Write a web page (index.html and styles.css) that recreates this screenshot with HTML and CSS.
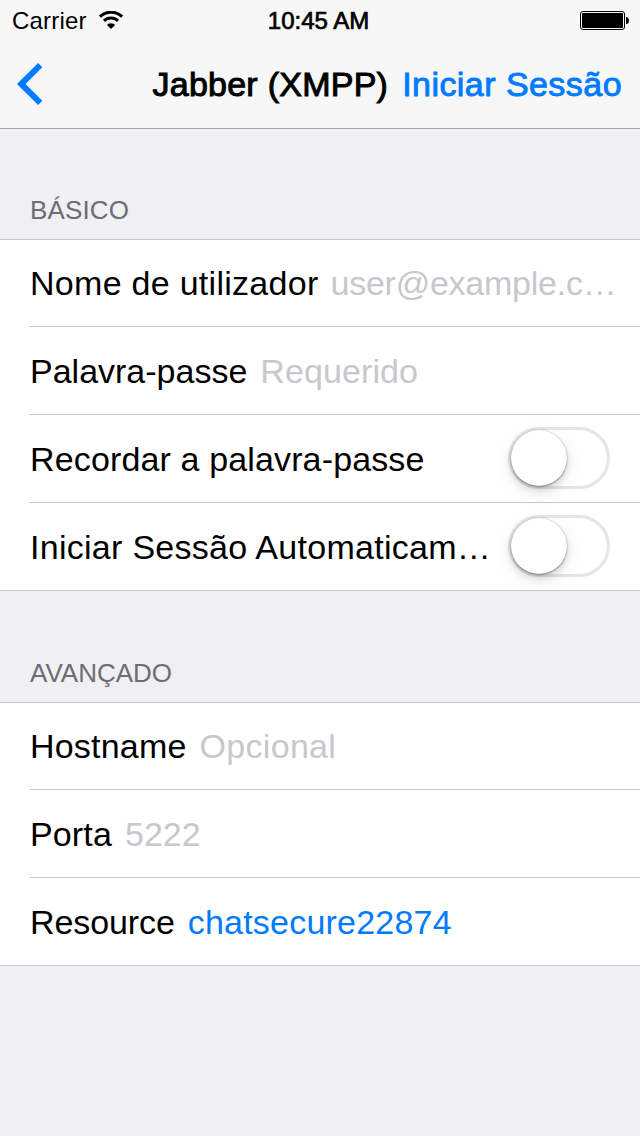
FILE: index.html
```html
<!DOCTYPE html>
<html lang="pt">
<head>
<meta charset="utf-8">
<title>Jabber (XMPP)</title>
<link rel="stylesheet" href="styles.css">
</head>
<body>
<header class="top">
  <div class="status">
    <div class="status-left">
      <span class="carrier">Carrier</span>
      <svg class="wifi" width="26" height="18" viewBox="0 0 26 18" fill="none" stroke="#000">
        <path d="M1.900 5.700A16 16 0 0 1 24.100 5.700" stroke-width="3.200"/>
        <path d="M6 9.900A10 10 0 0 1 20 9.900" stroke-width="3"/>
        <path d="M13 18L9.200 14.200Q9.500 12.300 13 12.300T16.800 14.200Z" fill="#000" stroke="none"/>
      </svg>
    </div>
    <span class="clock">10:45 AM</span>
    <div class="status-right">
      <svg class="battery" width="49" height="19" viewBox="0 0 49 19">
        <rect x="0.5" y="0.5" width="44" height="18" rx="2.5" fill="none" stroke="#000"/>
        <rect x="2" y="2" width="41" height="15" rx="1" fill="#000"/>
        <path d="M46 6h1q2 1 2 3.500t-2 3.500h-1z" fill="#000"/>
      </svg>
    </div>
  </div>
  <nav class="nav">
    <svg class="back" width="27" height="42" viewBox="0 0 27 42"><path d="M24.200 2.200L5.200 21L24.200 39.800" fill="none" stroke="#007aff" stroke-width="6"/></svg>
    <h1 class="title">Jabber (XMPP)</h1>
    <a class="login">Iniciar Sessão</a>
  </nav>
</header>
<main>
  <h2 class="heading">BÁSICO</h2>
  <section class="group">
    <div class="row"><span class="label wide">Nome de utilizador</span><span class="field hint-user">user@example.c…</span></div>
    <div class="row"><span class="label compact">Palavra-passe</span><span class="field hint-required">Requerido</span></div>
    <div class="row"><span class="label">Recordar a palavra-passe</span><span class="toggle"><span class="knob"></span></span></div>
    <div class="row"><span class="label auto">Iniciar Sessão Automaticam…</span><span class="toggle"><span class="knob"></span></span></div>
  </section>
  <h2 class="heading second">AVANÇADO</h2>
  <section class="group">
    <div class="row"><span class="label host">Hostname</span><span class="field hint-optional">Opcional</span></div>
    <div class="row"><span class="label">Porta</span><span class="field">5222</span></div>
    <div class="row"><span class="label resource">Resource</span><span class="field value">chatsecure22874</span></div>
  </section>
</main>
</body>
</html>
```
FILE: styles.css
```css
* { box-sizing: border-box; }
body {
  margin: 0;
  width: 640px;
  height: 1136px;
  overflow: hidden;
  background: #efeff4;
  color: #000;
  font: 34px/40px "Liberation Sans", Arial, sans-serif;
  white-space: nowrap;
}
h1, h2 { margin: 0; font-size: inherit; font-weight: 400; }
svg { display: block; }
.top { height: 129px; background: #f7f7f7; border-bottom: 1px solid #a7a7aa; }
.status {
  display: grid;
  grid-template-columns: 1fr auto 1fr;
  align-items: center;
  height: 40px;
  padding: 0 11px 0 12px;
  font-size: 24px;
  line-height: 38px;
}
.status-left { display: flex; align-items: center; gap: 11px; }
.carrier { letter-spacing: .2px; padding-top: 2px; }
.clock { padding: 2px 4px 0 0; -webkit-text-stroke: .7px #000; }
.status-right { display: flex; justify-content: flex-end; padding-top: 1px; }
.nav { display: flex; align-items: center; height: 88px; padding: 0 18px 0 16px; }
.title { margin-left: auto; letter-spacing: .25px; -webkit-text-stroke: 1px #000; }
.login { margin-left: 14px; color: #007aff; letter-spacing: .45px; -webkit-text-stroke: .9px #007aff; }
.heading {
  height: 110px;
  padding: 66px 30px 0;
  font-size: 26px;
  line-height: 30px;
  letter-spacing: .15px;
  color: #6d6d72;
}
.second { height: 111px; padding-top: 67px; letter-spacing: 0; }
.group { background: #fff; border-top: 1px solid #c8c7cc; border-bottom: 1px solid #c8c7cc; }
.row {
  display: flex;
  align-items: center;
  height: 88px;
  margin-left: 30px;
  padding-right: 22px;
  border-bottom: 1px solid #c8c7cc;
}
.row:first-child { height: 87px; }
.row:last-child { height: 87px; border-bottom: 0; }
.label { letter-spacing: .14px; }
.wide { letter-spacing: .28px; }
.compact { letter-spacing: 0; }
.auto { letter-spacing: .28px; }
.host { letter-spacing: .2px; }
.resource { letter-spacing: -.1px; }
.field { margin-left: 13px; color: #c7c7cd; }
.hint-user { letter-spacing: -.25px; margin-left: 12px; }
.hint-required { letter-spacing: .1px; }
.hint-optional { letter-spacing: .3px; }
.value { color: #007aff; letter-spacing: .22px; }
.toggle {
  width: 102px;
  height: 62px;
  margin: -2px 8px 0 auto;
  border: 3px solid #e5e5e5;
  border-radius: 31px;
}
.row:last-child .toggle { margin-top: -1px; }
.knob {
  display: block;
  width: 56px;
  height: 56px;
  border-radius: 50%;
  background: #fff;
  box-shadow: 0 0 1px rgba(0,0,0,.3), 0 1px 2px rgba(0,0,0,.35), 0 5px 9px rgba(0,0,0,.14), 0 5px 22px rgba(0,0,0,.06);
}
```
